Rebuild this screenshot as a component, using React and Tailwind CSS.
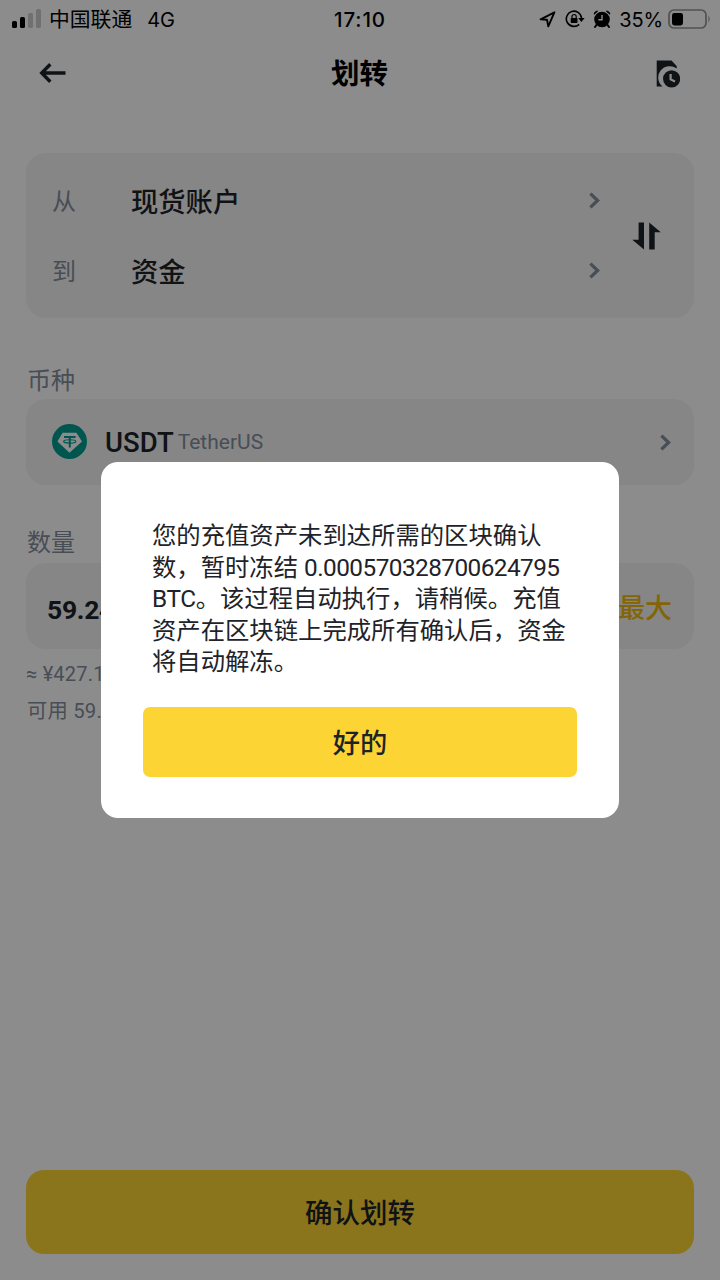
const UI_FONT = "font-['Roboto','Noto_Sans_CJK_SC',sans-serif]";

function ChevronRight() {
  return (
    <svg className="w-[11px] h-[17px] shrink-0" viewBox="0 0 11 17" fill="none">
      <path d="M1.4 1.6L8.6 8.5L1.4 15.4" stroke="#848e9c" strokeWidth="3.3" />
    </svg>
  );
}

function StatusBar() {
  return (
    <div className="h-9 grid grid-cols-3 items-center text-black font-['Inter','Noto_Sans_CJK_SC',sans-serif]">
      <div className="flex items-center pl-3">
        <svg className="w-[30px] h-5" viewBox="0 0 30 20">
          <rect x="0" y="12" width="5" height="7" rx="1.6" fill="#000" />
          <rect x="8" y="8" width="5" height="11" rx="1.6" fill="#000" />
          <rect x="16" y="4" width="5" height="15" rx="1.6" fill="#000" opacity=".2" />
          <rect x="24" y="0" width="5" height="19" rx="1.6" fill="#000" opacity=".2" />
        </svg>
        <span className="ml-[7px] pt-0.5 text-[20.8px] leading-9">中国联通</span>
        <span className="ml-[15px] pt-0.5 text-[20px] leading-9">4G</span>
      </div>
      <div className="pt-0.5 text-center text-[20.5px] font-medium leading-9 tracking-[0.9px]">17:10</div>
      <div className="flex items-center justify-end pr-[9px]">
        {/* Location */}
        <svg className="w-[17px] h-[18px]" viewBox="0 0 17 18" fill="none">
          <path d="M1.6 9.3L15.4 2.3L9.3 16.3L8 9.8Z" stroke="#000" strokeWidth="1.9" strokeLinejoin="round" />
        </svg>
        {/* Rotation lock */}
        <svg className="ml-[9px] w-5 h-[18px]" viewBox="0 0 20 18" fill="none">
          <path d="M14.2 14.3A7.6 7.6 0 1 1 16.5 8" stroke="#000" strokeWidth="1.6" />
          <path d="M13.2 8H19.6L16.4 12Z" fill="#000" />
          <rect x="5.7" y="8" width="6.8" height="5" rx=".8" fill="#000" />
          <path d="M7 8V6.6a2.1 2.1 0 0 1 4.2 0V8" stroke="#000" strokeWidth="1.2" />
        </svg>
        {/* Alarm */}
        <svg className="ml-[8px] w-[18px] h-[18px]" viewBox="0 0 18 18">
          <path d="M3.8 14.5L2 17M14.2 14.5L16 17" stroke="#000" strokeWidth="2" strokeLinecap="round" />
          <path d="M1.2 4.2A3 3 0 0 1 4.6 1.2ZM16.8 4.2A3 3 0 0 0 13.4 1.2Z" fill="#000" stroke="#000" strokeLinejoin="round" />
          <circle cx="9" cy="9.5" r="7.8" fill="#000" />
          <path d="M9 5V9.7H5.4" stroke="#fff" strokeWidth="1.4" fill="none" />
        </svg>
        <span className="ml-2 pt-0.5 text-[20px] leading-9 -tracking-[0.1px]">35%</span>
        <svg className="ml-[5px] w-[43px] h-5" viewBox="0 0 43 20">
          <rect x="1" y="1" width="37" height="18" rx="5" fill="none" stroke="#000" strokeOpacity=".42" strokeWidth="1.7" />
          <rect x="4" y="4" width="11" height="12.5" rx="2.4" fill="#000" />
          <path d="M40.5 6.6q2.4 3.4 0 6.8Z" fill="#000" opacity=".45" />
        </svg>
      </div>
    </div>
  );
}

function Header() {
  return (
    <div className="h-[75px] flex items-center justify-between pl-[39px] pr-10">
      <svg className="mb-0.5 w-7 h-5" viewBox="0 0 28 20" fill="none">
        <path d="M26.5 10H3M11.3 1.2L2.7 10L11.3 18.8" stroke="#1e2329" strokeWidth="3.4" />
      </svg>
      <h1 className="pt-1 pr-1 text-[28.5px] font-bold text-black">划转</h1>
      <svg className="w-6 h-7" viewBox="0 0 24 28">
        <path d="M.7 .4H15.5L20.7 6V8.6A10.8 10.8 0 0 0 6.6 26.6H.7Z" fill="#1e2329" />
        <circle cx="15.6" cy="18.8" r="8.6" fill="#1e2329" />
        <path d="M14.6 14V19.4L19 21.5" fill="none" stroke="#fff" strokeWidth="2.2" />
      </svg>
    </div>
  );
}

function AccountRow({ label, value }) {
  return (
    <div className="flex items-center h-[70px]">
      <span className="w-[79px] pt-[3px] text-2xl text-[#848e9c]">{label}</span>
      <span className="flex-1 pt-[5px] text-[27.3px] font-medium text-[#1e2329]">{value}</span>
      <ChevronRight />
    </div>
  );
}

function TetherLogo() {
  return (
    <svg className="mb-0.5 w-[35px] h-[35px]" viewBox="0 0 35 35">
      <circle cx="17.5" cy="17.5" r="17.5" fill="#009d91" />
      <path d="M10.6 8.7H24.4L30 17.5L17.5 28.8L5.4 17.5Z" fill="#fff" />
      <path d="M12 13H23.6M17.8 13V23.6" stroke="#009d91" strokeWidth="2" fill="none" />
      <ellipse cx="17.7" cy="17.4" rx="6.1" ry="1.7" stroke="#009d91" strokeWidth="1.1" fill="none" />
    </svg>
  );
}

function ConfirmDialog() {
  return (
    <div className="fixed inset-0 flex items-center justify-center bg-black/45">
      <div className="w-[518px] h-[356px] rounded-[17px] bg-white px-[42px] pt-[58px]">
        <p className="pl-[9px] text-[24.35px] leading-[31.6px] text-[#1e2329] whitespace-nowrap">
          您的充值资产未到达所需的区块确认<br />
          数，暂时冻结 <span className="tracking-[-0.55px]">0.000570328700624795</span><br />
          <span className="tracking-[-0.4px]">BTC</span>。该过程自动执行，请稍候。充值<br />
          资产在区块链上完成所有确认后，资金<br />
          将自动解冻。
        </p>
        <button className="mt-[29px] w-full h-[70px] rounded-[7px] bg-[#fcd535] pt-1 text-[27.3px] font-medium text-[#1e2329]">
          好的
        </button>
      </div>
    </div>
  );
}

export default function App() {
  return (
    <div className={`w-[720px] h-[1280px] overflow-hidden bg-white flex flex-col ${UI_FONT}`}>
      <StatusBar />
      <Header />

      <main className="flex-1 px-[26px] pt-[42px]">
        {/* From / to */}
        <section className="h-[165px] rounded-[20px] bg-[#f4f4f4] flex items-center pl-[26px] pr-[33px]">
          <div className="flex-1">
            <AccountRow label="从" value="现货账户" />
            <AccountRow label="到" value="资金" />
          </div>
          <svg className="ml-[32px] w-[29px] h-7" viewBox="0 0 29 28" fill="#1e2329">
            <path d="M6.6 .5H12V27.5L.3 17.8H6.6ZM17.2 27.5V.5L28.8 10.2H22.7V27.5Z" />
          </svg>
        </section>

        {/* Coin */}
        <h2 className="mt-[45px] pl-px text-2xl leading-9 text-[#848e9c]">币种</h2>
        <section className="h-[86px] rounded-[20px] bg-[#f4f4f4] flex items-center pl-[26px] pr-[23px]">
          <TetherLogo />
          <span className="ml-[18px] pt-0.5 text-[27.5px] font-medium text-[#1e2329]">USDT</span>
          <span className="ml-[4px] pt-0.5 flex-1 text-[21px] text-[#848e9c]">TetherUS</span>
          <ChevronRight />
        </section>

        {/* Amount */}
        <h2 className="mt-[40px] pl-px text-2xl leading-9 text-[#848e9c]">数量</h2>
        <section className="mt-[2px] h-[86px] rounded-[20px] bg-[#f4f4f4] flex items-center justify-between pl-[21px] pr-[22px]">
          <span className="pt-[7px] text-[26.5px] font-bold text-[#1e2329] -tracking-[0.3px]">59.24</span>
          <span className="pt-[7px] text-[27px] font-medium text-[#f0b90b]">最大</span>
        </section>
        <p className="mt-[7px] text-[20px] leading-9 text-[#848e9c] tracking-[0.2px]">≈ ¥427.1</p>
        <p className="pt-px pl-px text-[20.3px] leading-9 text-[#848e9c] tracking-[0.2px]">可用 59.</p>
      </main>

      <footer className="px-[26px] pb-[26px]">
        <button className="w-full h-[84px] rounded-[18px] bg-[#fcd535] pt-1 text-[27.5px] font-medium text-[#1e2329]">
          确认划转
        </button>
      </footer>

      <ConfirmDialog />
    </div>
  );
}
